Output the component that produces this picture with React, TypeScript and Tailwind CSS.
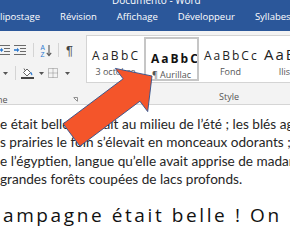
const tabs = ["lipostage", "Révision", "Affichage", "Développeur", "Syllabes"];

const styles = [
  { preview: "AaBbC", label: "3 octobre", w: "w-[57px]", cls: "text-[12px] tracking-[2.3px] text-[#222]", selected: false },
  { preview: "AaBbC", label: "¶ Aurillac", w: "w-[55px]", cls: "text-[12px] tracking-[2px] font-bold text-[#111]", selected: true },
  { preview: "AaBbCc", label: "Fond", w: "w-[63px]", cls: "text-[12px] tracking-[2px] text-[#222]", selected: false },
  { preview: "AaBbC", label: "Ilisible", w: "w-[60px]", cls: "text-[15px] tracking-[2px] text-[#222] -ml-[3px]", selected: false },
];

const lines = [
  "e était belle ! C’était au milieu de l’été ; les blés agitaient",
  "s prairies le foin s’élevait en monceaux odorants ; la rivière",
  "e l’égyptien, langue qu’elle avait apprise de madame de",
  "grandes forêts coupées de lacs profonds.",
];

const IndentIcon = () => (
  <svg width="12" height="11" viewBox="0 0 12 11">
    <path d="M0 0.5h12M6 3.5h6M6 6.5h6M0 9.5h12" stroke="#6b6b6b" strokeWidth="1" />
    <path d="M0 5h3.5" stroke="#2b79d0" strokeWidth="1.6" />
    <path d="M3 2.8L5.4 5 3 7.2z" fill="#2b79d0" />
  </svg>
);

const Sep = ({ h = "h-[14px]" }: { h?: string }) => <div className={`w-px ${h} bg-[#d4d4d4]`} />;

const Caret = () => (
  <svg width="5" height="3" viewBox="0 0 5 3">
    <path d="M0 0h5L2.5 3z" fill="#555" />
  </svg>
);

export default function App() {
  return (
    <div className="relative w-[290px] h-[247px] overflow-hidden bg-white" style={{ fontFamily: "'Open Sans', 'Noto Sans', sans-serif" }}>
      {/* barre de titre + onglets */}
      <div className="h-[31px] bg-[#2b579a] text-white">
        <div className="h-[6px] overflow-hidden flex pl-[112px]">
          <span className="text-[10px] leading-[10px] -mt-[5px] whitespace-nowrap">Documento - Word</span>
        </div>
        <div className="flex gap-[20px] h-[25px] items-center text-[9.5px] whitespace-nowrap pb-[2px]">
          {tabs.map((t) => (
            <span key={t}>{t}</span>
          ))}
        </div>
      </div>

      {/* ruban */}
      <div className="flex h-[74px] bg-[#f3f3f3] border-b border-[#d5d5d5]">
        <div className="w-[82px] shrink-0 flex flex-col">
          <div className="flex items-center h-[12px] mt-[13px]">
            <div className="-ml-[2px]"><IndentIcon /></div>
            <div className="ml-[4px]"><IndentIcon /></div>
            <div className="ml-[7px]"><Sep /></div>
            <svg className="ml-[6px]" width="13" height="13" viewBox="0 0 13 13">
              <text x="0.5" y="5.5" fontSize="6.5" fill="#2b79d0" fontFamily="'Liberation Sans', sans-serif">A</text>
              <text x="0.5" y="12.5" fontSize="6.5" fill="#2b79d0" fontFamily="'Liberation Sans', sans-serif">Z</text>
              <path d="M9 1v10" stroke="#555" strokeWidth="1.1" />
              <path d="M6.8 8.8L9 11.6 11.2 8.8" stroke="#555" strokeWidth="1.1" fill="none" />
            </svg>
            <div className="ml-[5px]"><Sep /></div>
            <span className="ml-[7px] text-[13px] leading-none text-[#444]" style={{ fontFamily: "'Liberation Sans', sans-serif" }}>¶</span>
          </div>
          <div className="flex items-center h-[12px] mt-[11px]">
            <div className="ml-[3px]"><Caret /></div>
            <div className="ml-[7px]"><Sep /></div>
            <svg className="ml-[5px]" width="13" height="12" viewBox="0 0 13 12">
              <path d="M2.5 5.5L6 2l3.5 3.5L6 9z" fill="#fff" stroke="#555" strokeWidth="0.9" />
              <path d="M4 3.5L3 1.5" stroke="#555" strokeWidth="0.9" />
              <path d="M9.5 5.5c1 1 1.5 2 1 2.5" stroke="#2b79d0" strokeWidth="1.4" fill="none" />
              <rect x="0" y="10" width="13" height="2" fill="#444" />
            </svg>
            <div className="ml-[5px]"><Caret /></div>
            <svg className="ml-[4px]" width="10" height="10" viewBox="0 0 10 10">
              <path d="M0.5 0.5h9v9h-9zM5 0.5v9M0.5 5h9" stroke="#8a8a8a" strokeWidth="1" fill="none" strokeDasharray="1 1" />
            </svg>
            <div className="ml-[7px]"><Caret /></div>
          </div>
          <div className="flex items-center justify-between mt-[15px] pr-[4px] h-[10px]">
            <span className="text-[9px] text-[#555] -ml-[3px] leading-none">he</span>
            <svg width="5" height="5" viewBox="0 0 5 5">
              <path d="M0.5 0.5h4v4M1 1l3 3" stroke="#777" strokeWidth="0.8" fill="none" />
            </svg>
          </div>
        </div>
        <div className="w-px bg-[#d5d5d5] my-[5px]" />
        <div className="flex-1 flex flex-col pt-[4px] pl-[4px]">
          <div className="flex h-[48px] bg-white border border-[#d4d4d4] border-r-0 overflow-hidden">
            {styles.map((s) => (
              <div
                key={s.label}
                className={`${s.w} shrink-0 flex flex-col overflow-hidden ${
                  s.selected ? "border-2 border-[#c6c6c6] mt-[1px] mb-[1px]" : ""
                }`}
              >
                <div className={`h-[29px] flex items-end pb-[3px] pl-[5px] whitespace-nowrap leading-none ${s.cls}`}>
                  {s.preview}
                </div>
                <div className="text-center text-[9px] text-[#555] leading-none mt-[2px] whitespace-nowrap">
                  {s.label}
                </div>
              </div>
            ))}
          </div>
          <div className="text-center text-[9px] text-[#555] mt-[9px] leading-none pl-[50px]">Style</div>
        </div>
      </div>

      {/* document */}
      <div className="pt-[10px] text-[13.6px] leading-[18.3px] text-[#262626] whitespace-nowrap" style={{ fontFamily: "Lato, sans-serif" }}>
        {lines.map((l, i) => (
          <div key={i}>{l}</div>
        ))}
        <div className="mt-[18px] text-[19px] tracking-[2.6px] text-[#111] pl-[3px]" style={{ fontFamily: "'Open Sans', sans-serif" }}>
          ampagne était belle ! On
        </div>
      </div>

      {/* flèche */}
      <svg className="absolute inset-0 pointer-events-none" width="290" height="247" viewBox="0 0 290 247">
        <polygon
          points="63.1,123.8 123.1,78.8 115.3,68.4 152,76 147.7,111.6 139.9,101.2 79.9,146.2"
          fill="#f4552a"
          stroke="#2f528f"
          strokeWidth="0.9"
          strokeLinejoin="miter"
        />
      </svg>
    </div>
  );
}
